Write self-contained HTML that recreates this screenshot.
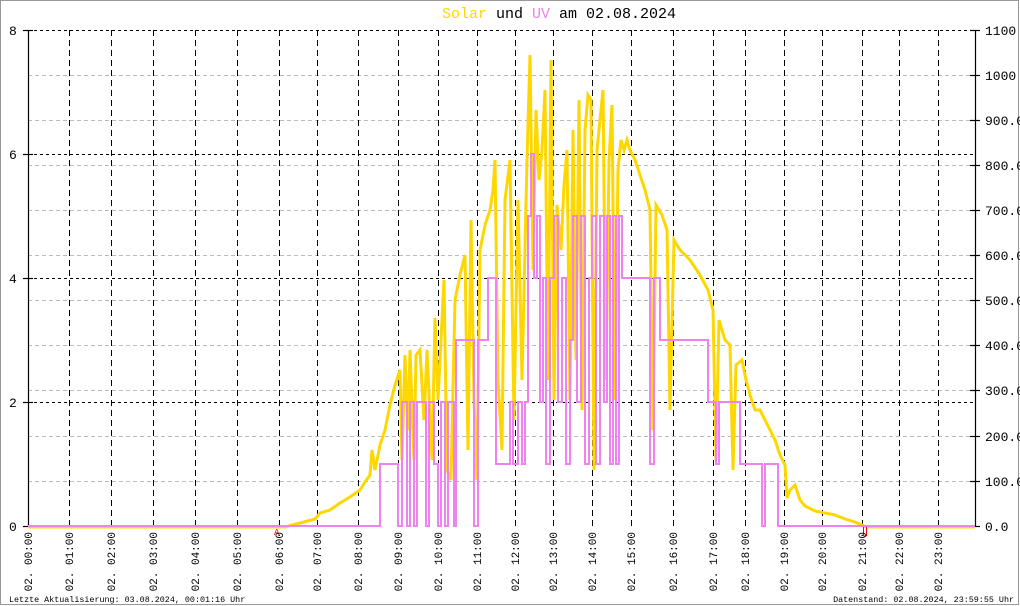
<!DOCTYPE html>
<html><head><meta charset="utf-8"><style>
html,body{margin:0;padding:0;background:#fff}
svg{display:block}
text{font-family:"Liberation Mono",monospace}
</style></head><body>
<svg width="1020" height="606" viewBox="0 0 1020 606" xmlns="http://www.w3.org/2000/svg">
<rect x="0.5" y="0.5" width="1018" height="604" fill="#fff" stroke="#999"/>
<g stroke="#bbb" stroke-dasharray="4,3" stroke-width="1">
<line x1="28" x2="975" y1="75.5" y2="75.5"/><line x1="28" x2="975" y1="120.5" y2="120.5"/>
<line x1="28" x2="975" y1="165.5" y2="165.5"/><line x1="28" x2="975" y1="210.5" y2="210.5"/>
<line x1="28" x2="975" y1="255.5" y2="255.5"/><line x1="28" x2="975" y1="300.5" y2="300.5"/>
<line x1="28" x2="975" y1="345.5" y2="345.5"/><line x1="28" x2="975" y1="390.5" y2="390.5"/>
<line x1="28" x2="975" y1="436.5" y2="436.5"/><line x1="28" x2="975" y1="481.5" y2="481.5"/>
</g>
<g stroke="#000" stroke-dasharray="3,3" stroke-width="1">
<line x1="28" x2="975" y1="30.5" y2="30.5"/><line x1="28" x2="975" y1="154.5" y2="154.5"/>
<line x1="28" x2="975" y1="278.5" y2="278.5"/><line x1="28" x2="975" y1="402.5" y2="402.5"/>
</g>
<g stroke="#000" stroke-dasharray="6,4" stroke-width="1">
<line x1="69.5" x2="69.5" y1="30" y2="526"/><line x1="111.5" x2="111.5" y1="30" y2="526"/>
<line x1="153.5" x2="153.5" y1="30" y2="526"/><line x1="195.5" x2="195.5" y1="30" y2="526"/>
<line x1="237.5" x2="237.5" y1="30" y2="526"/><line x1="279.5" x2="279.5" y1="30" y2="526"/>
<line x1="317.5" x2="317.5" y1="30" y2="526"/><line x1="358.5" x2="358.5" y1="30" y2="526"/>
<line x1="398.5" x2="398.5" y1="30" y2="526"/><line x1="438.5" x2="438.5" y1="30" y2="526"/>
<line x1="477.5" x2="477.5" y1="30" y2="526"/><line x1="515.5" x2="515.5" y1="30" y2="526"/>
<line x1="553.5" x2="553.5" y1="30" y2="526"/><line x1="592.5" x2="592.5" y1="30" y2="526"/>
<line x1="631.5" x2="631.5" y1="30" y2="526"/><line x1="673.5" x2="673.5" y1="30" y2="526"/>
<line x1="713.5" x2="713.5" y1="30" y2="526"/><line x1="745.5" x2="745.5" y1="30" y2="526"/>
<line x1="784.5" x2="784.5" y1="30" y2="526"/><line x1="822.5" x2="822.5" y1="30" y2="526"/>
<line x1="862.5" x2="862.5" y1="30" y2="526"/><line x1="899.5" x2="899.5" y1="30" y2="526"/>
<line x1="938.5" x2="938.5" y1="30" y2="526"/>
</g>
<g stroke="#000" stroke-width="1.2">
<line x1="28.5" x2="28.5" y1="30" y2="527"/>
<line x1="975.5" x2="975.5" y1="30" y2="527"/>
<line x1="23" x2="33" y1="30.5" y2="30.5"/><line x1="23" x2="33" y1="154.5" y2="154.5"/>
<line x1="23" x2="33" y1="278.5" y2="278.5"/><line x1="23" x2="33" y1="402.5" y2="402.5"/>
<line x1="23" x2="33" y1="526.5" y2="526.5"/>
<line x1="970" x2="980" y1="30.5" y2="30.5"/><line x1="970" x2="980" y1="75.5" y2="75.5"/>
<line x1="970" x2="980" y1="120.5" y2="120.5"/><line x1="970" x2="980" y1="165.5" y2="165.5"/>
<line x1="970" x2="980" y1="210.5" y2="210.5"/><line x1="970" x2="980" y1="255.5" y2="255.5"/>
<line x1="970" x2="980" y1="300.5" y2="300.5"/><line x1="970" x2="980" y1="345.5" y2="345.5"/>
<line x1="970" x2="980" y1="390.5" y2="390.5"/><line x1="970" x2="980" y1="436.5" y2="436.5"/>
<line x1="970" x2="980" y1="481.5" y2="481.5"/><line x1="970" x2="980" y1="526.5" y2="526.5"/>
</g>
<path fill="none" stroke="#ffd700" stroke-width="3" stroke-linejoin="miter" d="M28,527 H285 L300,523 L315,519 L320,513 L330,510 L340,503 L350,497 L360,490 L365,482 L370,475 L372,450 L375,470 L380,445 L385,430 L390,405 L395,385 L400,370 L402,460 L405,355 L408,430 L410,350 L414,460 L416,355 L420,350 L424,420 L427,350 L432,460 L435,318 L438,400 L441,340 L444,280 L447,470 L451,480 L455,300 L460,275 L465,255 L468,450 L471,220 L474,400 L477,480 L480,250 L485,225 L490,210 L493,190 L495,160 L498,380 L502,450 L505,200 L510,160 L514,420 L518,200 L522,380 L527,160 L530,55 L533,270 L536,110 L539,180 L542,150 L545,90 L548,380 L551,60 L554,400 L557,205 L561,250 L564,185 L567,150 L570,400 L573,130 L576,360 L579,100 L582,410 L585,130 L588,95 L591,100 L594,470 L597,150 L600,120 L603,90 L606,380 L609,160 L612,105 L615,400 L618,170 L621,140 L624,150 L627,140 L630,150 L635,160 L640,175 L645,190 L650,210 L653,430 L656,205 L662,215 L667,230 L670,410 L674,240 L680,250 L690,260 L700,275 L708,290 L713,310 L716,460 L719,320 L725,340 L730,345 L733,470 L736,365 L742,360 L746,380 L750,395 L755,410 L760,410 L765,420 L770,430 L775,440 L780,455 L785,465 L787,498 L790,490 L795,485 L800,500 L805,506 L815,511 L825,513 L835,515 L845,519 L855,522 L862,525 L866,527 H975"/>
<path fill="none" stroke="#ee82ee" stroke-width="2" d="M28,526 H380 V464 H398 V526 H402 V402 H407 V526 H410 V402 H414 V526 H417 V402 H426 V526 H429 V402 H434 V464 H438 V526 H441 V402 H445 V526 H448 V402 H454 V526 H456 V340 H474 V526 H478 V340 H488 V278 H496 V464 H510 V402 H513 V464 H518 V402 H522 V464 H525 V402 H528 V216 H531 V154 H534 V278 H537 V216 H540 V402 H543 V278 H546 V464 H550 V278 H554 V216 H558 V402 H562 V278 H566 V464 H570 V340 H573 V216 H577 V402 H581 V216 H585 V464 H589 V278 H592 V216 H596 V464 H600 V216 H604 V402 H607 V216 H610 V464 H613 V216 H616 V464 H619 V216 H622 V278 H650 V464 H654 V278 H660 V340 H708 V402 H716 V464 H719 V402 H740 V464 H762 V526 H765 V464 H778 V526 H975"/>
<text x="274" y="535" font-size="9" fill="#e00">A</text>
<path d="M863.5,527 V536 M866.5,527 V536 M863.5,536 H866.5" stroke="#e00" stroke-width="1" fill="none"/>
<text x="559" y="18" font-size="15" text-anchor="middle"><tspan fill="#ffd700">Solar</tspan><tspan fill="#000"> und </tspan><tspan fill="#ee82ee">UV</tspan><tspan fill="#000"> am 02.08.2024</tspan></text>
<g font-size="13" fill="#000" style="font-family:'Liberation Sans',sans-serif">
<text x="9" y="35">8</text><text x="9" y="159">6</text><text x="9" y="283">4</text><text x="9" y="407">2</text><text x="9" y="531">0</text>
<text x="985" y="35">1100</text><text x="985" y="80">1000</text><text x="985" y="125">900.0</text><text x="985" y="170">800.0</text>
<text x="985" y="215">700.0</text><text x="985" y="260">600.0</text><text x="985" y="305">500.0</text><text x="985" y="350">400.0</text>
<text x="985" y="395">300.0</text><text x="985" y="441">200.0</text><text x="985" y="486">100.0</text><text x="985" y="531">0.0</text>
</g>
<g font-size="11" fill="#000" text-anchor="end">
<text transform="translate(32,532) rotate(-90)">02. 00:00</text>
<text transform="translate(73,532) rotate(-90)">02. 01:00</text>
<text transform="translate(115,532) rotate(-90)">02. 02:00</text>
<text transform="translate(157,532) rotate(-90)">02. 03:00</text>
<text transform="translate(199,532) rotate(-90)">02. 04:00</text>
<text transform="translate(241,532) rotate(-90)">02. 05:00</text>
<text transform="translate(283,532) rotate(-90)">02. 06:00</text>
<text transform="translate(321,532) rotate(-90)">02. 07:00</text>
<text transform="translate(362,532) rotate(-90)">02. 08:00</text>
<text transform="translate(402,532) rotate(-90)">02. 09:00</text>
<text transform="translate(442,532) rotate(-90)">02. 10:00</text>
<text transform="translate(481,532) rotate(-90)">02. 11:00</text>
<text transform="translate(519,532) rotate(-90)">02. 12:00</text>
<text transform="translate(557,532) rotate(-90)">02. 13:00</text>
<text transform="translate(596,532) rotate(-90)">02. 14:00</text>
<text transform="translate(635,532) rotate(-90)">02. 15:00</text>
<text transform="translate(677,532) rotate(-90)">02. 16:00</text>
<text transform="translate(717,532) rotate(-90)">02. 17:00</text>
<text transform="translate(749,532) rotate(-90)">02. 18:00</text>
<text transform="translate(788,532) rotate(-90)">02. 19:00</text>
<text transform="translate(826,532) rotate(-90)">02. 20:00</text>
<text transform="translate(866,532) rotate(-90)">02. 21:00</text>
<text transform="translate(903,532) rotate(-90)">02. 22:00</text>
<text transform="translate(942,532) rotate(-90)">02. 23:00</text>
</g>
<text x="9" y="602" font-size="8.4" fill="#000">Letzte Aktualisierung: 03.08.2024, 00:01:16 Uhr</text>
<text x="1014" y="602" font-size="8.4" fill="#000" text-anchor="end">Datenstand: 02.08.2024, 23:59:55 Uhr</text>
</svg>
</body></html>
